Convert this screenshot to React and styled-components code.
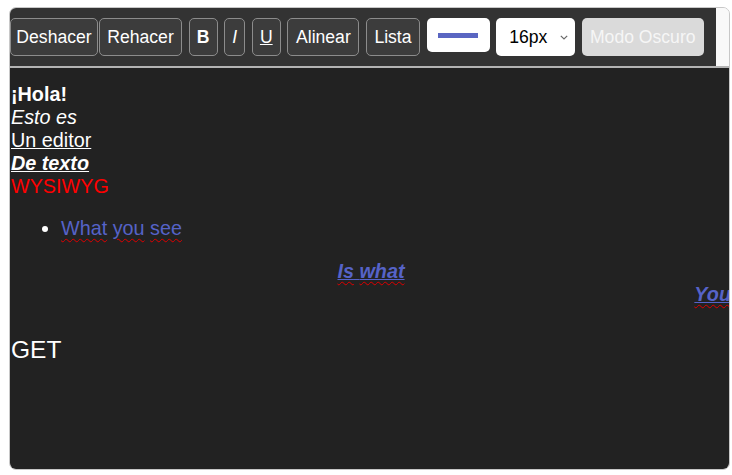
import React from "react";
import styled, { createGlobalStyle } from "styled-components";

const GlobalStyle = createGlobalStyle`
  html, body { margin: 0; padding: 0; background: #ffffff; }
  body { font-family: "Liberation Sans", Arial, sans-serif; }
`;

const Page = styled.div`
  padding: 7px 0 0 9px;
`;

const Shell = styled.div`
  box-sizing: border-box;
  width: 721px;
  height: 463px;
  border: 1px solid #c8c8c8;
  border-radius: 7px;
  overflow: hidden;
  background: #f9f9f9;
  display: flex;
  flex-direction: column;
`;

const ToolbarRow = styled.div`
  display: flex;
  border-bottom: 2px solid #b4b4b4;
`;

const Toolbar = styled.div`
  width: 706px;
  box-sizing: border-box;
  background: #333333;
  padding: 10px 0;
  display: flex;
  align-items: flex-start;
  gap: 6.6px;
`;

const Button = styled.button`
  box-sizing: border-box;
  width: ${(p) => p.$w}px;
  height: 38px;
  margin-left: ${(p) => p.$ml || 0}px;
  padding: 0;
  border: 1px solid #8c8c8c;
  border-radius: 5px;
  background: #3c3c3c;
  color: #ffffff;
  font-family: "Liberation Sans", Arial, sans-serif;
  font-size: 17.6px;
  font-weight: ${(p) => (p.$bold ? 700 : 400)};
  font-style: ${(p) => (p.$italic ? "italic" : "normal")};
  text-decoration: ${(p) => (p.$under ? "underline" : "none")};
  display: flex;
  align-items: center;
  justify-content: center;
  white-space: nowrap;
`;

const ColorPicker = styled.div`
  box-sizing: border-box;
  width: 63px;
  height: 34px;
  background: #ffffff;
  border-radius: 5px;
  display: flex;
  align-items: center;
  justify-content: center;
`;

const Swatch = styled.div`
  width: 40px;
  height: 5px;
  background: ${(p) => p.$color};
`;

const Select = styled.div`
  box-sizing: border-box;
  width: 79px;
  height: 38px;
  background: #ffffff;
  border-radius: 5px;
  display: flex;
  align-items: center;
  padding: 0 7px 0 13px;
  color: #000000;
  font-size: 17.6px;
`;

const SelectValue = styled.span`
  flex: 1;
`;

const DarkToggle = styled.button`
  box-sizing: border-box;
  width: 122px;
  height: 38px;
  padding: 0;
  border: none;
  border-radius: 5px;
  background: #dadada;
  color: #f6f6f6;
  font-family: "Liberation Sans", Arial, sans-serif;
  font-size: 17.6px;
  white-space: nowrap;
`;

const Filler = styled.div`
  flex: 1;
  background: #f9f9f9;
`;

const EditorArea = styled.div`
  flex: 1;
  background: #222222;
  color: #ffffff;
  font-size: 19.8px;
  padding: 14.5px 0 0 1px;
  margin-right: -2px;
`;

const Line = styled.div`
  font-weight: ${(p) => (p.$bold ? 700 : 400)};
  font-style: ${(p) => (p.$italic ? "italic" : "normal")};
  text-decoration: ${(p) => (p.$under ? "underline" : "none")};
  color: ${(p) => p.$color || "#ffffff"};
  text-align: ${(p) => p.$align || "left"};
  white-space: nowrap;
`;

const List = styled.ul`
  margin: 19.8px 0;
  padding-left: 50px;
`;

const Item = styled.li`
  color: #5663c8;
  &::marker { color: #ffffff; }
`;

const Misspelled = styled.span`
  text-decoration: underline wavy #e00000;
  text-decoration-thickness: 1.3px;
  text-underline-offset: 3px;
`;

const Big = styled.div`
  margin-top: 30px;
  font-size: 24.5px;
  color: #ffffff;
`;

const Chevron = () => (
  <svg width="8" height="5" viewBox="0 0 8 5" fill="none">
    <path d="M0.8 0.8 L4 4 L7.2 0.8" stroke="#6b6b6b" strokeWidth="1.2" />
  </svg>
);

const words = (text) =>
  text.split(" ").map((w, i, arr) => (
    <React.Fragment key={i}>
      <Misspelled>{w}</Misspelled>
      {i < arr.length - 1 ? " " : ""}
    </React.Fragment>
  ));

export default function App() {
  return (
    <>
      <GlobalStyle />
      <Page>
        <Shell>
          <ToolbarRow>
            <Toolbar>
              <Button $w={88}>Deshacer</Button>
              <Button $w={83} $ml={-5.6}>Rehacer</Button>
              <Button $w={29} $bold>B</Button>
              <Button $w={21} $italic>I</Button>
              <Button $w={29} $under>U</Button>
              <Button $w={72}>Alinear</Button>
              <Button $w={54}>Lista</Button>
              <ColorPicker>
                <Swatch $color="#5a66c2" />
              </ColorPicker>
              <Select>
                <SelectValue>16px</SelectValue>
                <Chevron />
              </Select>
              <DarkToggle>Modo Oscuro</DarkToggle>
            </Toolbar>
            <Filler />
          </ToolbarRow>
          <EditorArea>
            <Line $bold>¡Hola!</Line>
            <Line $italic>Esto es</Line>
            <Line $under>Un editor</Line>
            <Line $bold $italic $under>De texto</Line>
            <Line $color="#ff0000">WYSIWYG</Line>
            <List>
              <Item>{words("What you see")}</Item>
            </List>
            <Line $bold $italic $under $color="#5663c8" $align="center">
              {words("Is what")}
            </Line>
            <Line $bold $italic $under $color="#5663c8" $align="right">
              {words("You")}
            </Line>
            <Big>GET</Big>
          </EditorArea>
        </Shell>
      </Page>
    </>
  );
}
